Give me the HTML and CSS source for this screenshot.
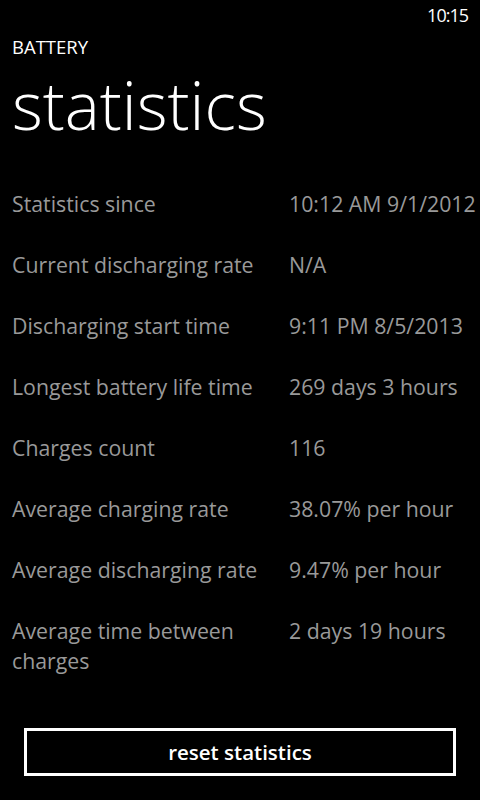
FILE: index.html
```html
<!DOCTYPE html>
<html lang="en">

<head>
    <meta charset="UTF-8">
    <meta name="viewport" content="width=device-width, initial-scale=1.0">
    <title>Battery statistics</title>
    <link rel="stylesheet" href="styles.css">
</head>

<body>
    <div class="page">
        <div class="tray">
            <span class="clock">10:15</span>
        </div>
        <div class="header">
            <div class="app-name">BATTERY</div>
            <h1 class="page-title">statistics</h1>
        </div>
        <div class="stats">
            <div class="row">
                <span class="label">Statistics since</span>
                <span class="value">10:12 AM 9/1/2012</span>
            </div>
            <div class="row">
                <span class="label">Current discharging rate</span>
                <span class="value">N/A</span>
            </div>
            <div class="row">
                <span class="label">Discharging start time</span>
                <span class="value">9:11 PM 8/5/2013</span>
            </div>
            <div class="row">
                <span class="label">Longest battery life time</span>
                <span class="value">269 days 3 hours</span>
            </div>
            <div class="row">
                <span class="label">Charges count</span>
                <span class="value">116</span>
            </div>
            <div class="row">
                <span class="label">Average charging rate</span>
                <span class="value">38.07% per hour</span>
            </div>
            <div class="row">
                <span class="label">Average discharging rate</span>
                <span class="value">9.47% per hour</span>
            </div>
            <div class="row">
                <span class="label">Average time between charges</span>
                <span class="value">2 days 19 hours</span>
            </div>
        </div>
        <button type="button" class="reset">reset statistics</button>
    </div>
</body>

</html>
```

FILE: styles.css
```css
body *{
    margin: 0;
    padding: 0;
}
body{
    margin: 0;
    background-color: #000;
    color: #fff;
    font-family: "Open Sans", "Noto Sans", sans-serif;
}
.page{
    display: flex;
    flex-direction: column;
    height: 100vh;
}
.tray{
    display: flex;
    justify-content: flex-end;
    height: 32px;
    padding-right: 12px;
}
.clock{
    font-size: 18px;
    line-height: 30px;
    letter-spacing: -1px;
}
.header{
    padding-left: 12px;
}
.app-name{
    margin-top: 3px;
    font-size: 18.5px;
    line-height: 24px;
}
.page-title{
    margin-top: 5px;
    font-size: 66px;
    font-weight: 300;
    line-height: 80px;
}
.stats{
    margin-top: 45px;
    padding-left: 12px;
}
.row{
    display: grid;
    grid-template-columns: 277px 1fr;
    padding-bottom: 31px;
    font-size: 21.3px;
    line-height: 30px;
    color: #999;
}
.row:last-child{
    padding-bottom: 0;
}
.label{
    padding-right: 12px;
}
.reset{
    margin: auto 24px 24px;
    height: 48px;
    border: 3px solid #fff;
    background-color: #000;
    color: #fff;
    font-family: inherit;
    font-size: 20.5px;
    font-weight: 600;
}
```
